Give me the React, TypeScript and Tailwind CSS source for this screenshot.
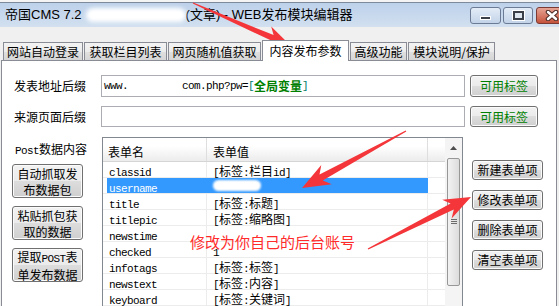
import React from 'react';

const CJK = "font-['Noto_Sans_CJK_SC',sans-serif]";
const MONO = "font-['Liberation_Mono',monospace] text-[11px] tracking-[-0.6px]";
const BTN =
  "border border-[#707070] rounded-[3px] bg-[linear-gradient(#f2f2f2,#ebebeb_50%,#dddddd_50%,#cfcfcf)] shadow-[inset_0_0_0_1px_#fbfbfb]";

// splits ascii / cjk runs so ascii gets the half-width mono look
function Mixed({ text }: { text: string }) {
  const parts = text.match(/[\x00-\x7f]+|[^\x00-\x7f]+/g) ?? [];
  return (
    <>
      {parts.map((p, i) =>
        /^[\x00-\x7f]/.test(p) ? (
          <span key={i} className={MONO + ' whitespace-pre'}>
            {p}
          </span>
        ) : (
          <span key={i} className={CJK + ' text-[12px]'}>
            {p}
          </span>
        )
      )}
    </>
  );
}

function arrow(x1: number, y1: number, x2: number, y2: number, head: number, hw: number, neck: number) {
  const dx = x2 - x1;
  const dy = y2 - y1;
  const L = Math.hypot(dx, dy);
  const ux = dx / L;
  const uy = dy / L;
  const px = -uy;
  const py = ux;
  const bx = x2 - ux * head;
  const by = y2 - uy * head;
  const nx = x2 - ux * head * 0.78;
  const ny = y2 - uy * head * 0.78;
  const pts = [
    [x1 + px * 0.6, y1 + py * 0.6],
    [nx + (px * neck) / 2, ny + (py * neck) / 2],
    [bx + (px * hw) / 2, by + (py * hw) / 2],
    [x2, y2],
    [bx - (px * hw) / 2, by - (py * hw) / 2],
    [nx - (px * neck) / 2, ny - (py * neck) / 2],
    [x1 - px * 0.6, y1 - py * 0.6],
  ];
  return pts.map((p) => p.map((v) => v.toFixed(1)).join(',')).join(' ');
}

function TitleBar() {
  return (
    <div className="h-[27px] flex flex-col">
      <div className="h-[2px] bg-[#f4f4f4]" />
      <div className="h-[1px] bg-[#7d8a9c]" />
      <div className="flex-1 flex bg-linear-to-b from-[#bdd1ea] to-[#d2e0f0]">
        <div className="flex items-center pl-[5px] text-[13px] text-black font-['Liberation_Sans','Noto_Sans_CJK_SC',sans-serif] whitespace-nowrap">
          <span>帝国CMS 7.2</span>
          <span className="inline-block ml-[4px] w-[100px] h-[14px] rounded-full bg-white blur-[2px]" />
          <span>(文章) - WEB发布模块编辑器</span>
        </div>
        <div className="ml-auto -mr-[20px] flex gap-[2px] pt-[4px]">
          <div className="w-[31px] h-[17px] rounded-[3px] border border-[#6b7b95] bg-linear-to-b from-[#e3ecf7] to-[#c3d3e8] flex items-end justify-center pb-[3px]">
            <div className="w-[11px] h-[4px] bg-[#3a3f48] border border-white" />
          </div>
          <div className="w-[30px] h-[17px] rounded-[3px] border border-[#6b7b95] bg-linear-to-b from-[#e3ecf7] to-[#c3d3e8] flex items-center justify-center">
            <div className="w-[11px] h-[9px] border-2 border-[#3a3f48] bg-[#dfe6ee] shadow-[0_0_0_1px_#ffffff]" />
          </div>
          <div className="ml-[1px] w-[43px] h-[17px] rounded-[3px] border border-[#7b3a33] bg-linear-to-b from-[#e6a394] to-[#c4523c] flex items-center pl-[8px]">
            <svg width="14" height="11" viewBox="0 0 14 11">
              <path d="M3 2 L11 9 M11 2 L3 9" stroke="#4a2a26" strokeWidth="4.5" strokeLinecap="round" />
              <path d="M3 2 L11 9 M11 2 L3 9" stroke="#ffffff" strokeWidth="2.5" strokeLinecap="round" />
            </svg>
          </div>
        </div>
      </div>
    </div>
  );
}

const tabs = [
  { label: '网站自动登录', w: 'w-[80px]' },
  { label: '获取栏目列表', w: 'w-[83px]' },
  { label: '网页随机值获取', w: 'w-[93px]' },
  { label: '内容发布参数', w: 'w-[87px]', active: true },
  { label: '高级功能', w: 'w-[57px]' },
  { label: '模块说明/保护', w: 'w-[87px]' },
];

const rows = [
  { name: 'classid', value: '[标签:栏目id]' },
  { name: 'username', value: '', selected: true },
  { name: 'title', value: '[标签:标题]' },
  { name: 'titlepic', value: '[标签:缩略图]' },
  { name: 'newstime', value: '' },
  { name: 'checked', value: '1' },
  { name: 'infotags', value: '[标签:标签]' },
  { name: 'newstext', value: '[标签:内容]' },
  { name: 'keyboard', value: '[标签:关键词]' },
];

export default function App() {
  return (
    <div className={'relative w-[559px] h-[306px] overflow-hidden bg-[#f0f0f0] text-black ' + CJK}>
      <TitleBar />

      {/* tabs */}
      <div className="pt-[13px] pl-[3px] flex items-end gap-[1px] h-[33px]">
        {tabs.map((t) =>
          t.active ? (
            <div
              key={t.label}
              className={t.w + ' relative z-10 -mb-px h-[21px] bg-white border border-b-0 border-[#898c95] flex items-center justify-center text-[12px]'}
            >
              {t.label}
            </div>
          ) : (
            <div
              key={t.label}
              className={t.w + ' h-[18px] border border-b-0 border-[#898c95] bg-[linear-gradient(#f3f3f3,#ececec_50%,#e0e0e0_50%,#d6d6d6)] flex items-center justify-center text-[12px]'}
            >
              {t.label}
            </div>
          )
        )}
      </div>

      {/* panel */}
      <div className="ml-[1px] w-[556px] h-[260px] border border-[#898c95] bg-white pt-[14px]">
        <div className="flex items-center h-[22px]">
          <div className="w-[99px] pl-[12px] text-[12px]">发表地址后缀</div>
          <div className="w-[364px] h-[22px] border border-[#abadb3] flex items-center pl-[2px] whitespace-pre">
            <Mixed text="www.         com.php?pw=" />
            <span className={MONO + ' text-[#007a6a]'}>[</span>
            <span className="text-[12px] font-bold text-[#008000]">全局变量</span>
            <span className={MONO + ' text-[#007a6a]'}>]</span>
          </div>
          <button className={BTN + ' ml-[5px] w-[68px] h-[22px] text-[12px] text-[#008000]'}>可用标签</button>
        </div>

        <div className="flex items-center h-[21px] mt-[9px]">
          <div className="w-[99px] pl-[12px] text-[12px]">来源页面后缀</div>
          <div className="w-[364px] h-[21px] border border-[#abadb3]" />
          <button className={BTN + ' ml-[5px] w-[68px] h-[21px] text-[12px] text-[#008000]'}>可用标签</button>
        </div>

        <div className="flex items-start mt-[10px]">
          {/* left column */}
          <div className="w-[100px]">
            <div className="pt-[3px] pl-[13px] leading-[14px]">
              <Mixed text="Post数据内容" />
            </div>
            <div className="ml-[10px] mt-[6px] flex flex-col gap-[8px]">
              {[
                ['自动抓取发', '布数据包'],
                ['粘贴抓包获', '取的数据'],
                ['提取POST表', '单发布数据'],
              ].map(([a, b]) => (
                <button key={a} className={BTN + ' w-[71px] h-[34px] flex flex-col items-center justify-center leading-[14px]'}>
                  <span>
                    <Mixed text={a} />
                  </span>
                  <span>
                    <Mixed text={b} />
                  </span>
                </button>
              ))}
            </div>
          </div>

          {/* list view */}
          <div className="w-[361px] h-[180px] border border-[#828790] flex">
            <div className="w-[342px]">
              <div className="h-[24px] flex bg-linear-to-b from-white from-35% to-[#ececec] border-b border-[#d5d5d5] text-[12px]">
                <div className="w-[104px] pl-[5px] pt-[4px] flex items-center border-r border-[#dedede]">表单名</div>
                <div className="w-[221px] pl-[6px] pt-[4px] flex items-center border-r border-[#dedede]">表单值</div>
                <div className="flex-1" />
              </div>
              {rows.map((r) => (
                <div key={r.name} className="h-[16px] flex border-b border-[#ececec] leading-[15px]">
                  <div className="w-[4px]" />
                  <div
                    className={
                      r.selected
                        ? 'w-[100px] pl-[2px] bg-[#3399ff] text-white border-r border-[#3399ff]'
                        : 'w-[100px] pl-[2px] border-r border-[#ececec]'
                    }
                  >
                    <span className={MONO}>{r.name}</span>
                  </div>
                  <div
                    className={
                      r.selected
                        ? 'w-[221px] pl-[6px] bg-[#3399ff] flex items-center'
                        : 'w-[221px] pl-[6px] border-r border-[#ececec]'
                    }
                  >
                    {r.selected ? (
                      <span className="inline-block w-[48px] h-[11px] rounded-full bg-white blur-[1px]" />
                    ) : (
                      <Mixed text={r.value} />
                    )}
                  </div>
                </div>
              ))}
            </div>
            {/* scrollbar */}
            <div className="w-[17px] bg-[#f4f4f4] flex flex-col items-center">
              <div className="h-[19px] flex items-center justify-center">
                <svg width="7" height="4" viewBox="0 0 7 4">
                  <path d="M0 4 L3.5 0 L7 4 Z" fill="#4d4d4d" />
                </svg>
              </div>
              <div className="mt-[1px] w-[13px] h-[128px] rounded-[2px] border border-[#979797] bg-linear-to-r from-[#f2f2f2] to-[#dcdcdc] flex flex-col items-center justify-center gap-[1px] pb-[2px]">
                <div className="w-[6px] h-[1px] bg-[#6b6b6b]" />
                <div className="w-[6px] h-[1px] bg-[#6b6b6b]" />
                <div className="w-[6px] h-[1px] bg-[#6b6b6b]" />
              </div>
            </div>
          </div>

          {/* right buttons */}
          <div className="pl-[9px] pt-[23px] flex flex-col gap-[10px]">
            {['新建表单项', '修改表单项', '删除表单项', '清空表单项'].map((b) => (
              <button key={b} className={BTN + ' w-[71px] h-[20px] text-[12px] leading-[18px]'}>
                {b}
              </button>
            ))}
          </div>
        </div>
      </div>

      {/* annotations */}
      <div className="absolute left-[190px] top-[234px] text-[15px] leading-[16px] text-[#ff2b2b] whitespace-nowrap">
        修改为你自己的后台账号
      </div>
      <svg className="absolute left-0 top-0 pointer-events-none" width="559" height="306">
        <polygon fill="#f4363a" points={arrow(193, 3, 291, 46, 26, 20, 6)} />
        <polygon fill="#f4363a" points={arrow(406, 131, 302, 188, 28, 22, 7)} />
        <polygon fill="#f4363a" points={arrow(368, 249, 471, 197, 27, 21, 7)} />
      </svg>
    </div>
  );
}
